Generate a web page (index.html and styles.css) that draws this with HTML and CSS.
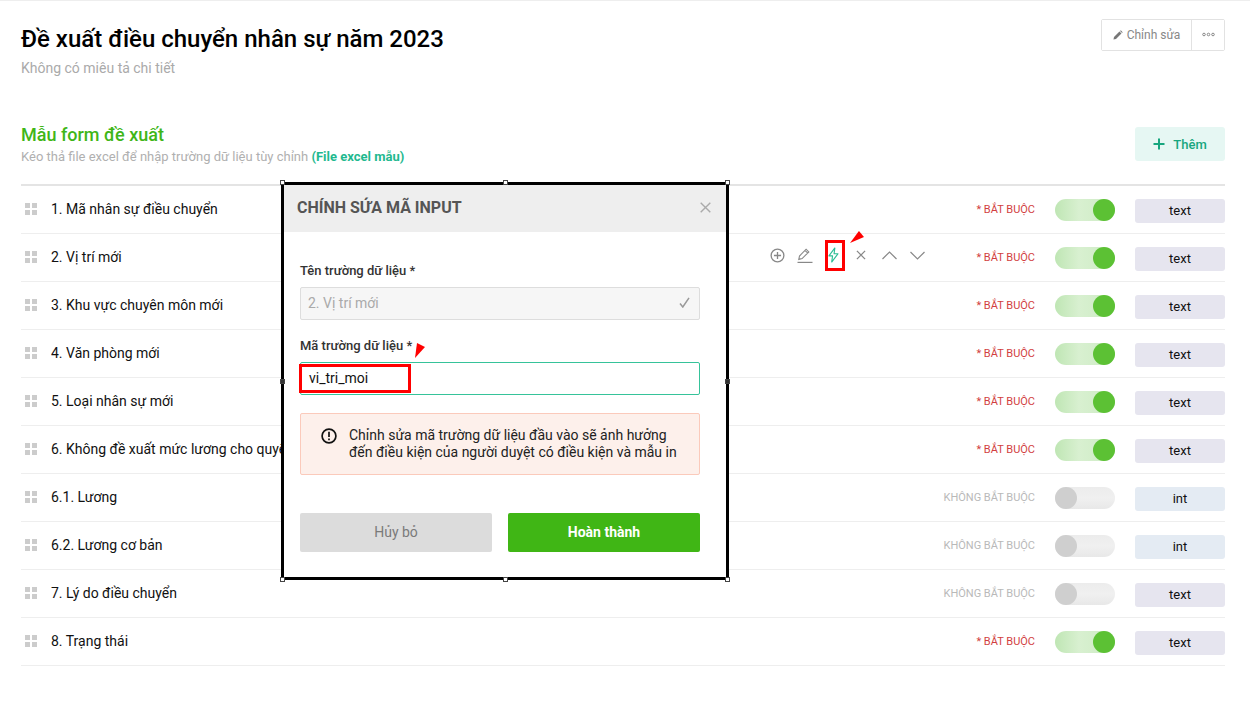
FILE: index.html
```html
<!doctype html>
<html lang="vi">
  <head>
    <meta charset="UTF-8" />
    <title>Đề xuất điều chuyển nhân sự năm 2023</title>
    <link rel="stylesheet" href="styles.css">
  </head>
  <body>
    <div class="page">
      <header class="top">
        <div>
          <h1>Đề xuất điều chuyển nhân sự năm 2023</h1>
          <p class="desc">Không có miêu tả chi tiết</p>
        </div>
        <div class="btn-group">
          <button class="btn-edit">
            <svg width="10" height="10" viewBox="0 0 11 11"><path d="M0.5 10.5l0.6-2.8 6-6 2.2 2.2-6 6z M7.8 1l0.8-0.6 2 2-0.6 0.8z" fill="#777"/></svg>
            Chỉnh sửa
          </button>
          <button class="btn-more">
            <svg width="13" height="5" viewBox="0 0 13 5"><g fill="none" stroke="#888"><circle cx="2" cy="2.5" r="1.3"/><circle cx="6.5" cy="2.5" r="1.3"/><circle cx="11" cy="2.5" r="1.3"/></g></svg>
          </button>
        </div>
      </header>

      <section class="form-head">
        <div>
          <h2>Mẫu form đề xuất</h2>
          <p class="hint">Kéo thả file excel để nhập trường dữ liệu tùy chỉnh <a href="#">(File excel mẫu)</a></p>
        </div>
        <button class="btn-add">
          <svg width="12" height="12" viewBox="0 0 12 12"><path d="M6 0.5v11M0.5 6h11" stroke="#17a67e" stroke-width="2"/></svg>
          Thêm
        </button>
      </section>

      <ul class="fields">
        <li class="row">
          <span class="grip"><i></i><i></i><i></i><i></i></span>
          <span class="name">1. Mã nhân sự điều chuyển</span>
          <span class="req">* BẮT BUỘC</span>
          <span class="toggle on"></span>
          <span class="tag">text</span>
        </li>
        <li class="row">
          <span class="grip"><i></i><i></i><i></i><i></i></span>
          <span class="name">2. Vị trí mới</span>
          <span class="actions">
            <svg width="15" height="15" viewBox="0 0 16 16" fill="none" stroke="#888" stroke-width="1.4"><circle cx="8" cy="8" r="6.8"/><path d="M8 4.2v7.6M4.2 8h7.6"/></svg>
            <svg width="16" height="16" viewBox="0 0 16 16" fill="none" stroke="#888" stroke-width="1.1"><path d="M1.8 12.4l0.7-3.4 6.6-6.8 2.7 2.7-6.7 6.7z M8 3.4l2.8 2.7"/><path d="M0.5 15.4h15" stroke-width="1.2"/></svg>
            <svg width="11" height="16" viewBox="0 0 12 17" fill="none" stroke="#2bbd94" stroke-width="1.2" stroke-linejoin="round"><path d="M7.5 0.8L1 9.5h4l-1 6.7 6.8-9H6.6z"/></svg>
            <svg width="10" height="10" viewBox="0 0 11 11" fill="none" stroke="#888" stroke-width="1.4"><path d="M1 1l9 9M10 1l-9 9"/></svg>
            <svg width="15" height="9" viewBox="0 0 15 9" fill="none" stroke="#888" stroke-width="1.2"><path d="M0.5 8l7-7 7 7"/></svg>
            <svg width="15" height="9" viewBox="0 0 15 9" fill="none" stroke="#888" stroke-width="1.2"><path d="M0.5 1l7 7 7-7"/></svg>
          </span>
          <span class="req">* BẮT BUỘC</span>
          <span class="toggle on"></span>
          <span class="tag">text</span>
        </li>
        <li class="row">
          <span class="grip"><i></i><i></i><i></i><i></i></span>
          <span class="name">3. Khu vực chuyên môn mới</span>
          <span class="req">* BẮT BUỘC</span>
          <span class="toggle on"></span>
          <span class="tag">text</span>
        </li>
        <li class="row">
          <span class="grip"><i></i><i></i><i></i><i></i></span>
          <span class="name">4. Văn phòng mới</span>
          <span class="req">* BẮT BUỘC</span>
          <span class="toggle on"></span>
          <span class="tag">text</span>
        </li>
        <li class="row">
          <span class="grip"><i></i><i></i><i></i><i></i></span>
          <span class="name">5. Loại nhân sự mới</span>
          <span class="req">* BẮT BUỘC</span>
          <span class="toggle on"></span>
          <span class="tag">text</span>
        </li>
        <li class="row">
          <span class="grip"><i></i><i></i><i></i><i></i></span>
          <span class="name">6. Không đề xuất mức lương cho quyết định</span>
          <span class="req">* BẮT BUỘC</span>
          <span class="toggle on"></span>
          <span class="tag">text</span>
        </li>
        <li class="row">
          <span class="grip"><i></i><i></i><i></i><i></i></span>
          <span class="name">6.1. Lương</span>
          <span class="req off">KHÔNG BẮT BUỘC</span>
          <span class="toggle"></span>
          <span class="tag int">int</span>
        </li>
        <li class="row">
          <span class="grip"><i></i><i></i><i></i><i></i></span>
          <span class="name">6.2. Lương cơ bản</span>
          <span class="req off">KHÔNG BẮT BUỘC</span>
          <span class="toggle"></span>
          <span class="tag int">int</span>
        </li>
        <li class="row">
          <span class="grip"><i></i><i></i><i></i><i></i></span>
          <span class="name">7. Lý do điều chuyển</span>
          <span class="req off">KHÔNG BẮT BUỘC</span>
          <span class="toggle"></span>
          <span class="tag">text</span>
        </li>
        <li class="row">
          <span class="grip"><i></i><i></i><i></i><i></i></span>
          <span class="name">8. Trạng thái</span>
          <span class="req">* BẮT BUỘC</span>
          <span class="toggle on"></span>
          <span class="tag">text</span>
        </li>
      </ul>
    </div>

    <div class="modal">
      <div class="modal-head">
        <h3>CHÍNH SỨA MÃ INPUT</h3>
        <svg width="11" height="11" viewBox="0 0 11 11" fill="none" stroke="#aaa" stroke-width="1.4"><path d="M0.7 0.7l9.6 9.6M10.3 0.7l-9.6 9.6"/></svg>
      </div>
      <div class="modal-body">
        <label class="field-label">Tên trường dữ liệu *</label>
        <div class="input disabled">
          <span>2. Vị trí mới</span>
          <svg width="11" height="11" viewBox="0 0 11 11" fill="none" stroke="#999" stroke-width="1.5"><path d="M1 6.5l2.8 3.5L10 0.8"/></svg>
        </div>
        <label class="field-label second">Mã trường dữ liệu *</label>
        <div class="input focused"><span>vi_tri_moi</span></div>
        <div class="alert">
          <svg width="16" height="16" viewBox="0 0 16 16" fill="none" stroke="#111" stroke-width="1.7"><circle cx="8" cy="8" r="6.9"/><path d="M8 3.8v5.2M8 10.5v1.8"/></svg>
          <p>Chỉnh sửa mã trường dữ liệu đầu vào sẽ ảnh hưởng đến điều kiện của người duyệt có điều kiện và mẫu in</p>
        </div>
        <div class="modal-actions">
          <button class="btn-cancel">Hủy bỏ</button>
          <button class="btn-done">Hoàn thành</button>
        </div>
      </div>
    </div>

    <!-- selection handles of the pasted image -->
    <span class="handle h-tl"></span>
    <span class="handle h-tc"></span>
    <span class="handle h-tr"></span>
    <span class="handle dark h-ml"></span>
    <span class="handle dark h-mr"></span>
    <span class="handle h-bl"></span>
    <span class="handle h-bc"></span>
    <span class="handle h-br"></span>

    <!-- red annotations -->
    <span class="mark mark-bolt"></span>
    <span class="mark mark-code"></span>
    <span class="arrow arrow-bolt"></span>
    <span class="arrow arrow-code"></span>
  </body>
</html>
```

FILE: styles.css
```css
* {
  margin: 0;
  padding: 0;
  box-sizing: border-box;
}

body {
  font-family: Roboto, 'Liberation Sans', sans-serif;
  background: #fff;
  color: #111;
  height: 717px;
  overflow: hidden;
  position: relative;
  border-top: 1px solid #eee;
}

button {
  font-family: inherit;
  cursor: pointer;
}

.page {
  padding: 0 25px 0 21px;
}

.top {
  display: flex;
  justify-content: space-between;
  align-items: flex-start;
  padding-top: 18px;
  height: 126px;
}

h1 {
  font-size: 24px;
  line-height: 40px;
  font-weight: 500;
  color: #000;
}

.desc {
  font-size: 14px;
  line-height: 20px;
  margin-top: -1px;
  color: #aaa;
}

.btn-group {
  display: flex;
  height: 32px;
  border: 1px solid #e2e2e2;
  border-radius: 2px;
}

.btn-group button {
  border: 0;
  background: #fff;
  display: flex;
  align-items: center;
  justify-content: center;
}

.btn-edit {
  width: 90px;
  gap: 4px;
  font-size: 12px;
  line-height: 14px;
  color: #888;
  border-right: 1px solid #e2e2e2 !important;
}

.btn-more {
  width: 32px;
  padding-bottom: 2px;
}

.form-head {
  display: flex;
  justify-content: space-between;
  align-items: flex-start;
  height: 59px;
  border-bottom: 2px solid #e4e4e4;
}

h2 {
  font-size: 18px;
  line-height: 24px;
  font-weight: 500;
  color: #3fb618;
  margin-top: -4px;
}

.hint {
  font-size: 13px;
  line-height: 18px;
  margin-top: 1px;
  color: #b0b0b0;
}

.hint a {
  color: #1fb98f;
  font-weight: 700;
  text-decoration: none;
}

.btn-add {
  width: 90px;
  height: 34px;
  border: 0;
  border-radius: 3px;
  background: #e6f7f3;
  color: #17a67e;
  font-size: 13px;
  font-weight: 500;
  display: flex;
  align-items: center;
  justify-content: center;
  gap: 8px;
}

.fields {
  list-style: none;
}

.row {
  display: flex;
  align-items: center;
  height: 48px;
  border-bottom: 1px solid #eee;
}

.grip {
  display: grid;
  grid-template-columns: 5px 5px;
  gap: 2px;
  margin: -2px 14px 0 4px;
}

.grip i {
  width: 5px;
  height: 5px;
  background: #ccc;
}

.name {
  flex: 1;
  font-size: 14px;
  line-height: 18px;
  margin-top: -2px;
  white-space: nowrap;
  overflow: hidden;
}

.actions {
  display: grid;
  grid-template-columns: repeat(6, 28px);
  justify-items: center;
  align-items: center;
  margin: -5px 45px 0 0;
}

.req {
  font-size: 11px;
  color: #d23f3f;
}

.req.off {
  color: #b9b9b9;
}

.toggle {
  width: 60px;
  height: 22px;
  margin: 0 20px;
  border-radius: 11px;
  background: linear-gradient(#ececec, #f0f0f0 50%, #e8e8e8);
  display: flex;
}

.toggle::before {
  content: '';
  width: 22px;
  height: 22px;
  border-radius: 50%;
  background: #cfcfcf;
}

.toggle.on {
  background: linear-gradient(90deg, #bfe6b4, #d8f0d0 40%, #cdebc4);
  justify-content: flex-end;
}

.toggle.on::before {
  background: #5cc134;
}

.tag {
  width: 90px;
  height: 24px;
  line-height: 24px;
  margin-top: 2px;
  border-radius: 3px;
  background: #e6e5ef;
  font-size: 13px;
  text-align: center;
  color: #111;
}

.tag.int {
  background: #e4ebf3;
}

.modal {
  position: absolute;
  top: 181px;
  left: 281px;
  width: 448px;
  height: 398px;
  background: #fff;
  border: 3px solid #000;
}

.modal-head {
  height: 47px;
  background: #eee;
  display: flex;
  align-items: center;
  justify-content: space-between;
  padding: 0 15px 3px 13px;
}

.modal-head h3 {
  font-size: 16px;
  font-weight: 700;
  color: #555;
}

.modal-body {
  padding: 0 26px 0 16px;
}

.field-label {
  display: block;
  font-size: 13px;
  line-height: 16px;
  font-weight: 500;
  color: #333;
  padding-top: 31px;
  margin-bottom: 8px;
}

.field-label.second {
  padding-top: 18px;
}

.input {
  height: 33px;
  border-radius: 2px;
  display: flex;
  align-items: center;
  justify-content: space-between;
  padding: 0 9px 2px 7px;
  font-size: 14px;
}

.input.disabled {
  background: #f6f6f6;
  border: 1px solid #ddd;
  color: #aaa;
}

.input.focused {
  border: 1px solid #36c39a;
  padding-left: 8px;
  color: #111;
}

.alert {
  display: flex;
  gap: 12px;
  height: 62px;
  margin-top: 18px;
  padding: 14px 16px 0 20px;
  background: #fdf0eb;
  border: 1px solid #fbcabb;
  border-radius: 2px;
}

.alert svg {
  flex: none;
}

.alert p {
  font-size: 14px;
  line-height: 17px;
  color: #222;
  margin-top: -1px;
}

.modal-actions {
  display: flex;
  gap: 16px;
  margin-top: 38px;
}

.modal-actions button {
  flex: 1;
  height: 39px;
  border: 0;
  border-radius: 2px;
  font-size: 14px;
  padding-bottom: 2px;
}

.btn-cancel {
  background: #dcdcdc;
  color: #7a7a7a;
}

.btn-done {
  background: #40b615;
  color: #fff;
  font-weight: 700;
}

.handle {
  position: absolute;
  width: 5px;
  height: 5px;
  background: #fff;
  border: 1px solid #444;
}

.handle.dark {
  background: #333;
}

.h-tl { top: 179px; left: 280px; }
.h-tc { top: 179px; left: 503px; }
.h-tr { top: 179px; left: 725px; }
.h-ml { top: 378px; left: 280px; }
.h-mr { top: 378px; left: 725px; }
.h-bl { top: 576px; left: 280px; }
.h-bc { top: 576px; left: 503px; }
.h-br { top: 576px; left: 725px; }

.mark {
  position: absolute;
  border: 3px solid #f00;
}

.mark-bolt {
  top: 239px;
  left: 825px;
  width: 20px;
  height: 31px;
}

.mark-code {
  top: 363px;
  left: 299px;
  width: 112px;
  height: 29px;
}

.arrow {
  position: absolute;
  background: #f00;
}

.arrow-bolt {
  top: 230px;
  left: 850px;
  width: 14px;
  height: 12px;
  clip-path: polygon(0 100%, 64% 0, 100% 50%);
}

.arrow-code {
  top: 342px;
  left: 415px;
  width: 10px;
  height: 15px;
  clip-path: polygon(0 100%, 20% 0, 100% 27%);
}
```
